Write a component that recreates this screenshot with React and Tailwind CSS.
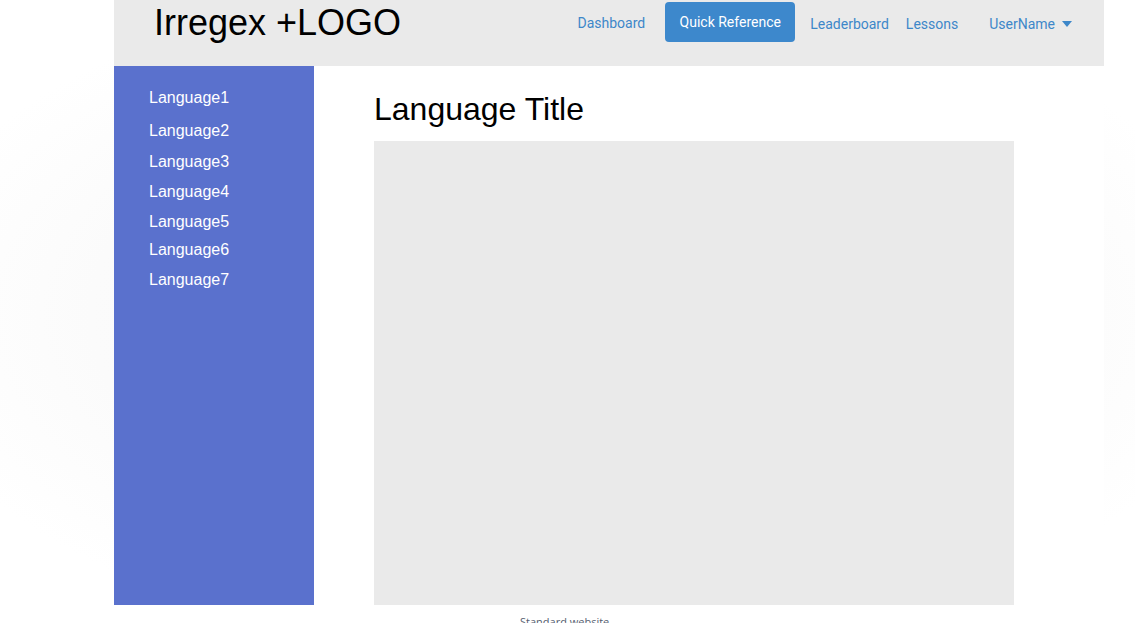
import React from 'react';

const languages = [
  { name: 'Language1', cls: 'mt-[23px]' },
  { name: 'Language2', cls: 'mt-[15px]' },
  { name: 'Language3', cls: 'mt-[13px]' },
  { name: 'Language4', cls: 'mt-[12px]' },
  { name: 'Language5', cls: 'mt-[12px]' },
  { name: 'Language6', cls: 'mt-[10px]' },
  { name: 'Language7', cls: 'mt-[12px]' },
];

const NavLink = ({ children, className = '' }) => (
  <a href="#" className={`text-[14px] leading-[44px] text-[#3d87c9] ${className}`}>
    {children}
  </a>
);

const App = () => {
  return (
    <div className="min-h-[623px] w-[1135px] overflow-hidden bg-[radial-gradient(ellipse_60%_55%_at_50%_50%,#f6f6f6_0%,#fbfbfb_70%,#ffffff_100%)]">
      <div className="ml-[114px] w-[990px]">
        {/* header */}
        <header className="flex h-[66px] items-start justify-between bg-[#eaeaea] pl-[40px] pr-[32px]">
          <div className="pt-[1px] font-['Liberation_Sans',Arial,sans-serif] text-[36px] leading-[44px] text-black">
            Irregex +LOGO
          </div>
          <nav className="flex items-start pt-[2px] font-['Roboto',sans-serif]">
            <NavLink className="-mt-[1px]">Dashboard</NavLink>
            <button className="ml-[20px] h-[40px] w-[130px] rounded-[4px] bg-[#3d88cc] pt-[1px] text-[14px] text-white">
              Quick Reference
            </button>
            <NavLink className="ml-[15px]">Leaderboard</NavLink>
            <NavLink className="ml-[17px]">Lessons</NavLink>
            <a href="#" className="ml-[31px] flex items-center text-[14px] leading-[44px] text-[#3d87c9]">
              UserName
              <svg width="10" height="6" viewBox="0 0 10 6" className="ml-[7px]">
                <path d="M0 0h10L5 6z" fill="#3d87c9" />
              </svg>
            </a>
          </nav>
        </header>

        {/* body */}
        <div className="flex bg-white">
          <aside className="flex h-[539px] w-[200px] flex-col bg-[#5a71cd] pl-[35px] font-['Liberation_Sans',Arial,sans-serif]">
            {languages.map((l) => (
              <a key={l.name} href="#" className={`text-[16px] leading-[18px] text-white ${l.cls}`}>
                {l.name}
              </a>
            ))}
          </aside>

          <main className="flex-1 pl-[60px]">
            <h1 className="mt-[25px] h-[50px] font-['Liberation_Sans',Arial,sans-serif] text-[32px] leading-[36px] text-black">
              Language Title
            </h1>
            <div className="h-[464px] w-[640px] bg-[#eaeaea]" />
          </main>
        </div>

        <footer className="bg-white pt-[10px] pl-[406px] font-['Open_Sans',sans-serif] text-[11px] leading-[14px] text-[#556070]">
          Standard website
        </footer>
      </div>
    </div>
  );
};

export default App;
